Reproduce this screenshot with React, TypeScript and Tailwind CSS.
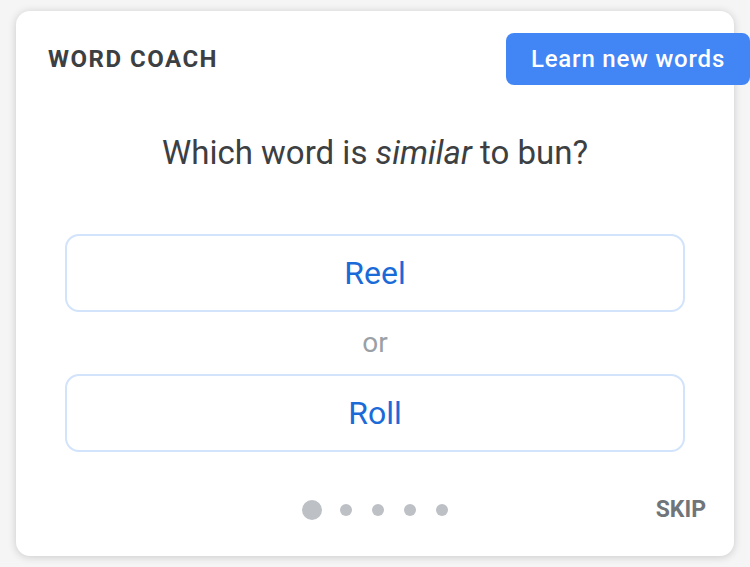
const dots = [true, false, false, false, false]

function Option({ label }: { label: string }) {
  return (
    <button className="w-full h-[78px] rounded-[14px] border-2 border-[#d2e3fc] bg-white text-[32px] text-[#1a6bd8]">
      {label}
    </button>
  )
}

export default function App() {
  return (
    <div
      className="w-[750px] h-[567px] bg-[#f5f5f5] pt-[11px] pl-[16px] overflow-hidden"
      style={{ fontFamily: 'Roboto, "Noto Sans", sans-serif' }}
    >
      <div className="w-[718px] h-[545px] bg-white rounded-[14px] shadow-[0_1px_8px_rgba(0,0,0,0.18)] flex flex-col">
        {/* Header */}
        <div className="flex items-center justify-between pl-[32px] pt-[22px] -mr-[16px]">
          <span className="text-[24px] font-bold tracking-[1.5px] text-[#3c4043]">WORD COACH</span>
          <button className="h-[52px] w-[244px] rounded-[8px] bg-[#4285f4] text-white text-[24px] font-medium tracking-[0.8px]">
            Learn new words
          </button>
        </div>

        {/* Question */}
        <div className="mt-[48px] text-center text-[33px] text-[#3c4043] leading-[40px]">
          Which word is <i>similar</i> to bun?
        </div>

        {/* Options */}
        <div className="mt-[61px] px-[49px] flex flex-col items-center">
          <Option label="Reel" />
          <div className="h-[62px] flex items-center text-[28px] text-[#9aa0a6]">or</div>
          <Option label="Roll" />
        </div>

        {/* Footer */}
        <div className="mt-[46px] flex items-center relative h-[24px]">
          <div className="flex-1 flex items-center justify-center gap-[20px]">
            {dots.map((active, i) => (
              <span
                key={i}
                className={active ? 'w-[20px] h-[20px] rounded-full bg-[#bdc1c6] -mr-[2px]' : 'w-[12px] h-[12px] rounded-full bg-[#bdc1c6]'}
              />
            ))}
          </div>
          <span className="absolute right-[28px] text-[23px] font-bold text-[#70757a]">SKIP</span>
        </div>
      </div>
    </div>
  )
}
